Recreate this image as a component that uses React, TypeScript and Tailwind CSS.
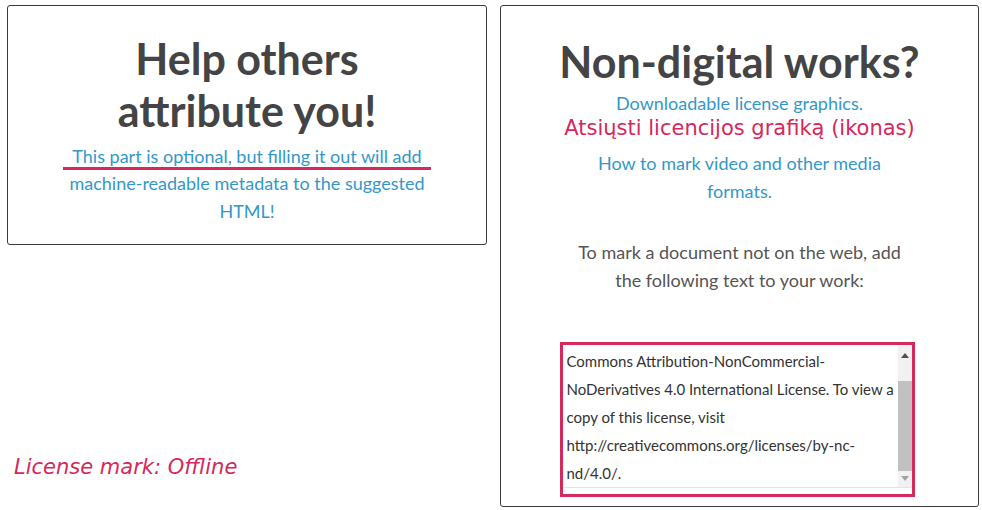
export default function App() {
    const sans = { fontFamily: "Lato, 'Noto Sans', sans-serif" };
    const verdana = { fontFamily: "'DejaVu Sans', Verdana, sans-serif" };

    return (
        <div className="flex h-[510px] w-[982px] bg-white" style={sans}>
            {/* left column */}
            <div className="flex w-[500px] flex-col pl-[7px] pt-[5px]">
                <section className="flex h-[240px] w-[480px] flex-col items-center rounded-[3px] border border-[#3a3a3a] px-4 pt-[27px] text-center">
                    <h2 className="text-[43px] font-bold leading-[52px] text-[#444444]">
                        Help others
                        <br />
                        attribute you!
                    </h2>
                    <div className="mt-[5px] text-[18px] leading-[28px] text-[#3398c8]">
                        <p className="inline-block border-b-[3px] border-[#d5285b] px-[9px] leading-[22px]">
                            This part is optional, but filling it out will add
                        </p>
                        <p className="mt-[-1px]">
                            machine-readable metadata to the suggested
                            <br />
                            HTML!
                        </p>
                    </div>
                </section>

                <p className="ml-[7px] mt-[207px] text-[21px] italic text-[#d5285b]" style={verdana}>
                    License mark: Offline
                </p>
            </div>

            {/* right column */}
            <div className="pt-[5px]">
                <section className="flex h-[502px] w-[479px] flex-col items-center rounded-[3px] border border-[#3a3a3a] pt-[30px] text-center">
                    <h2 className="text-[43px] font-bold leading-[52px] text-[#444444]">
                        Non-digital works?
                    </h2>
                    <a className="mt-[3px] text-[18px] leading-[24px] text-[#3398c8]">Downloadable license graphics.</a>
                    <p className="text-[21px] leading-[26px] text-[#d5285b]" style={verdana}>
                        Atsiųsti licencijos grafiką (ikonas)
                    </p>
                    <p className="mt-[8px] w-[310px] text-[18px] leading-[28px] text-[#3398c8]">
                        How to mark video and other media formats.
                    </p>
                    <p className="mt-[33px] w-[340px] text-[18px] leading-[28px] text-[#555555]">
                        To mark a document not on the web, add the following text to your work:
                    </p>

                    <div className="mr-[5px] mt-[48px] h-[155px] w-[355px] border-[3px] border-[#d5285b] bg-white">
                        <div className="flex h-[143px] border-b border-[#e4e4e4]">
                            <div className="flex-1 overflow-hidden pl-[4px] pt-[2px] text-left text-[15px] leading-[28px] text-[#333333]">
                                <p>Commons Attribution-NonCommercial-</p>
                                <p>NoDerivatives 4.0 International License. To view a</p>
                                <p>copy of this license, visit</p>
                                <p>http://creativecommons.org/licenses/by-nc-</p>
                                <p>nd/4.0/.</p>
                            </div>
                            {/* scrollbar */}
                            <div className="flex w-[14px] flex-col items-center bg-[#f1f1f1]">
                                <svg viewBox="0 0 8 5" className="mt-[8px] h-[5px] w-[8px]">
                                    <path d="M0 5 L4 0 L8 5 Z" fill="#505050" />
                                </svg>
                                <div className="mt-[23px] h-[90px] w-full bg-[#c1c1c1]" />
                                <div className="flex-1" />
                                <svg viewBox="0 0 8 5" className="mb-[6px] h-[5px] w-[8px]">
                                    <path d="M0 0 L4 5 L8 0 Z" fill="#a3a3a3" />
                                </svg>
                            </div>
                        </div>
                    </div>
                </section>
            </div>
        </div>
    );
}
